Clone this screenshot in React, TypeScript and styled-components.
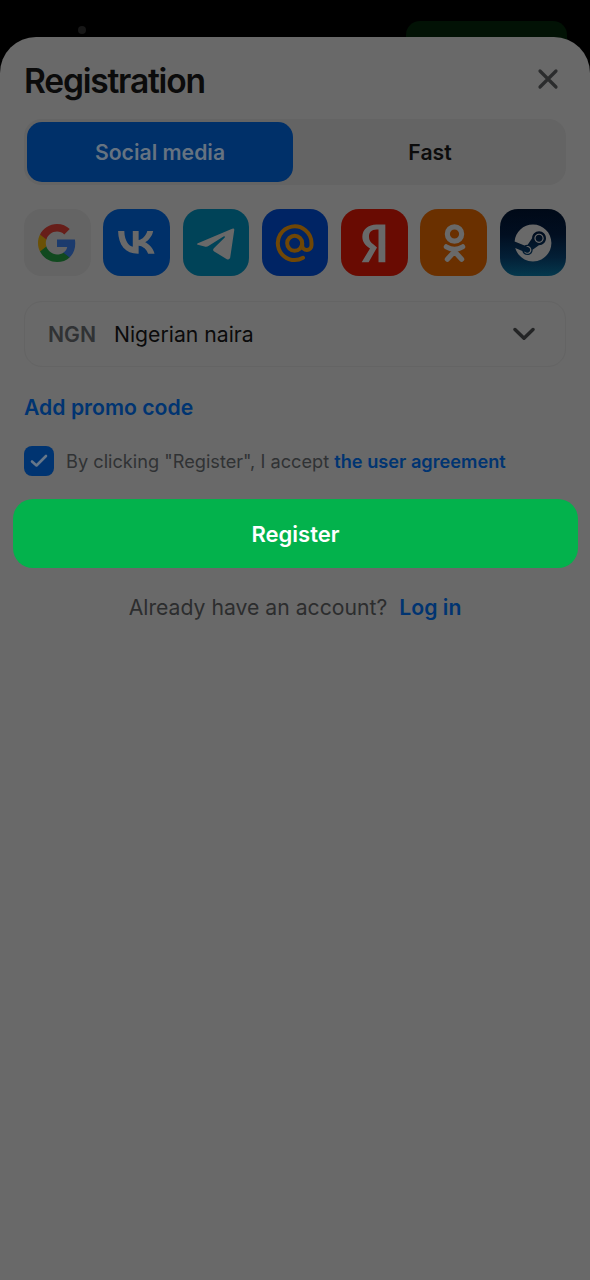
import React, { useState } from 'react';
import styled, { createGlobalStyle } from 'styled-components';
import { FaSteam } from 'react-icons/fa';

const GlobalStyle = createGlobalStyle`
  * { box-sizing: border-box; }
  html, body { margin: 0; background: #000; }
  body { font-family: Inter, "Liberation Sans", sans-serif; }
  button { font: inherit; border: 0; padding: 0; background: none; cursor: pointer; }
`;

const Page = styled.div`
  min-height: 1280px;
  display: flex;
  flex-direction: column;
  background: #000;
`;

const SiteBar = styled.div`
  height: 60px;
  padding: 21px 23px 0 78px;
  display: flex;
  justify-content: space-between;
  align-items: flex-start;
`;

const SiteDot = styled.span`
  width: 8px;
  height: 8px;
  margin-top: 5px;
  border-radius: 50%;
  background: #171717;
`;

const SiteButton = styled.span`
  width: 161px;
  height: 39px;
  border-radius: 14px;
  background: #021205;
`;

const Sheet = styled.main`
  position: relative;
  flex: 1;
  margin-top: -23.5px;
  padding: 0 24px;
  border-radius: 36px 36px 0 0;
  background: #696969;
  display: flex;
  flex-direction: column;
`;

const Header = styled.header`
  height: 82px;
  padding: 6px 7px 0 0;
  display: flex;
  align-items: center;
  justify-content: space-between;
`;

const Title = styled.h1`
  margin: 0;
  font-size: 33.6px;
  line-height: 40px;
  font-weight: 600;
  letter-spacing: -1.22px;
  color: #0b0b0b;
`;

const CloseButton = styled.button`
  display: flex;
  margin-top: -3px;
`;

const Tabs = styled.div`
  height: 66px;
  padding: 3px;
  display: grid;
  grid-template-columns: 1fr 1fr;
  gap: 4px;
  border-radius: 18px;
  background: #646464;
`;

const Tab = styled.button<{ $active: boolean }>`
  border-radius: 15px;
  font-size: 21.2px;
  font-weight: 600;
  && {
    color: ${(p) => (p.$active ? '#667381' : '#0c0c0c')};
    background: ${(p) => (p.$active ? '#003069' : 'transparent')};
  }
`;

const Networks = styled.div`
  margin-top: 24.5px;
  display: flex;
  justify-content: space-between;
`;

const Network = styled.button<{ $fill: string }>`
  width: 66.5px;
  height: 67px;
  border-radius: 18px;
  display: flex;
  align-items: center;
  justify-content: center;
  color: #696969;
  && { background: ${(p) => p.$fill}; }
  svg { display: block; }
`;

const Select = styled.div`
  margin-top: 24.5px;
  height: 66.5px;
  padding: 0 30px 0 23px;
  border: 1px solid #646464;
  border-radius: 18px;
  display: flex;
  align-items: center;
  font-size: 21.2px;
`;

const Code = styled.span`
  width: 66px;
  font-weight: 600;
  color: #303234;
`;

const Currency = styled.span`
  flex: 1;
  color: #0b0b0b;
`;

const Link = styled.a`
  color: #003471;
  font-weight: 600;
`;

const Promo = styled(Link)`
  margin-top: 25.5px;
  font-size: 21.2px;
  line-height: 28px;
`;

const Agreement = styled.label`
  margin-top: 25.5px;
  height: 30.5px;
  display: flex;
  align-items: center;
  gap: 12px;
  font-size: 18.2px;
  color: #303234;
  white-space: nowrap;
`;

const Check = styled.span`
  width: 30px;
  height: 30px;
  border-radius: 8px;
  background: #003471;
  display: flex;
  align-items: center;
  justify-content: center;
`;

const RegisterButton = styled.button`
  height: 69px;
  margin: 22.5px -12px 0 -11px;
  border-radius: 20px;
  font-size: 22px;
  font-weight: 600;
  && { background: #03b24c; color: #fff; }
`;

const Login = styled.p`
  margin: 25px 0 0;
  display: flex;
  justify-content: center;
  gap: 12px;
  font-size: 21.2px;
  line-height: 28px;
  color: #2c2d2e;
`;

const GoogleLogo = () => (
  <svg width="38" height="38" viewBox="0 0 18 18">
    <path fill="#1c3b6d" d="M17.64 9.2c0-.637-.057-1.251-.164-1.84H9v3.481h4.844c-.209 1.125-.843 2.078-1.796 2.717v2.258h2.908c1.702-1.567 2.684-3.874 2.684-6.615z" />
    <path fill="#11491f" d="M9 18c2.43 0 4.467-.806 5.956-2.18l-2.908-2.259c-.806.54-1.837.86-3.048.86-2.344 0-4.328-1.584-5.036-3.711H.957v2.332C2.438 15.983 5.482 18 9 18z" />
    <path fill="#6b5106" d="M3.964 10.71c-.18-.54-.282-1.117-.282-1.71s.102-1.17.282-1.71V4.958H.957C.347 6.173 0 7.548 0 9s.348 2.827.957 4.042l3.007-2.332z" />
    <path fill="#671e19" d="M9 3.58c1.321 0 2.508.454 3.44 1.345l2.582-2.58C13.463.891 11.426 0 9 0 5.482 0 2.438 2.017.957 4.958L3.964 7.29C4.672 5.163 6.656 3.58 9 3.58z" />
  </svg>
);

const VkLogo = () => (
  <svg width="36.6" height="22.8" viewBox="16.8 30.4 66.8 41.7" fill="currentColor">
    <path d="M53.2083 72.042C30.4167 72.042 17.4168 56.417 16.8751 30.417H28.2917C28.6667 49.5003 37.0833 57.5836 43.7499 59.2503V30.417H54.5002V46.8752C61.0836 46.1669 67.9994 38.667 70.3328 30.417H81.0831C79.2914 40.5837 71.7914 48.0836 66.4581 51.1669C71.7914 53.6669 80.3333 60.2086 83.5833 72.042H71.7499C69.2082 64.1253 62.8753 58.0003 54.5002 57.1669V72.042Z" />
  </svg>
);

const TelegramLogo = () => (
  <svg width="66" height="66" viewBox="23.500 28.500 198 198" fill="currentColor">
    <path d="M68 128L171 84.500Q179 82 177 91L165 172Q162 180 155 176L117 153Q111 149 116 143L148 112Q152 106 145 108L101 136Q95 140 88 138L68 133Q63 131 68 128Z" />
  </svg>
);

const MailLogo = () => (
  <svg width="66" height="66" viewBox="261 28 198 198" fill="none" stroke="#704706" strokeWidth="12" strokeLinecap="round">
    <circle cx="359" cy="128" r="22.500" />
    <path d="M381.500 128V134A14 14 0 0 0 409.500 134V127A50.500 50.500 0 1 0 384 171.500" />
  </svg>
);

const YandexLogo = () => (
  <svg width="66" height="66" viewBox="20 28.500 198 198" fill="currentColor">
    <path d="M153 72V185H132.500V87H127C111 87 104 96 104 109C104 120 109 126 118 132L128 141L103 185H82L107 144C92 135 84 124 84 109C84 87 101 72 127 72Z" />
  </svg>
);

const OkLogo = () => (
  <svg width="66" height="66" viewBox="257 28.500 198 198" fill="none" stroke="currentColor" strokeWidth="15.500" strokeLinecap="round">
    <circle cx="357.500" cy="100.500" r="21.500" />
    <path d="M333 139Q357.500 154 382 139M357.500 153L336 176M357.500 153L379 176" />
  </svg>
);

const networks = [
  { name: 'Google', fill: '#646464', icon: <GoogleLogo /> },
  { name: 'VK', fill: '#003069', icon: <VkLogo /> },
  { name: 'Telegram', fill: '#004358', icon: <TelegramLogo /> },
  { name: 'Mail', fill: '#002464', icon: <MailLogo /> },
  { name: 'Yandex', fill: '#690b02', icon: <YandexLogo /> },
  { name: 'Odnoklassniki', fill: '#6a3000', icon: <OkLogo /> },
  { name: 'Steam', fill: 'linear-gradient(#000917 0%, #010e20 38%, #031f36 72%, #04384d 100%)', icon: <FaSteam size={38} /> },
];

export default function App() {
  const [tab, setTab] = useState('Social media');
  return (
    <>
      <GlobalStyle />
      <Page>
        <SiteBar>
          <SiteDot />
          <SiteButton />
        </SiteBar>
        <Sheet>
          <Header>
            <Title>Registration</Title>
            <CloseButton aria-label="Close">
              <svg width="22" height="22" viewBox="0 0 22 22" stroke="#2b2c2d" strokeWidth="3.2" strokeLinecap="round">
                <path d="M3 3L19 19M19 3L3 19" />
              </svg>
            </CloseButton>
          </Header>
          <Tabs>
            {['Social media', 'Fast'].map((name) => (
              <Tab key={name} $active={tab === name} onClick={() => setTab(name)}>{name}</Tab>
            ))}
          </Tabs>
          <Networks>
            {networks.map((n) => (
              <Network key={n.name} $fill={n.fill} aria-label={n.name}>{n.icon}</Network>
            ))}
          </Networks>
          <Select>
            <Code>NGN</Code>
            <Currency>Nigerian naira</Currency>
            <svg width="22" height="14" viewBox="0 0 22 14" fill="none" stroke="#232425" strokeWidth="3.4" strokeLinecap="round" strokeLinejoin="round">
              <path d="M2 2.500L11 11.300L20 2.500" />
            </svg>
          </Select>
          <Promo>Add promo code</Promo>
          <Agreement>
            <Check>
              <svg width="18" height="14" viewBox="0 0 18 14" fill="none" stroke="#667789" strokeWidth="2.6" strokeLinecap="round" strokeLinejoin="round">
                <path d="M2 7.500L6.500 11.500L16 2" />
              </svg>
            </Check>
            <span>By clicking "Register", I accept <Link>the user agreement</Link></span>
          </Agreement>
          <RegisterButton>Register</RegisterButton>
          <Login>Already have an account? <Link>Log in</Link></Login>
        </Sheet>
      </Page>
    </>
  );
}
